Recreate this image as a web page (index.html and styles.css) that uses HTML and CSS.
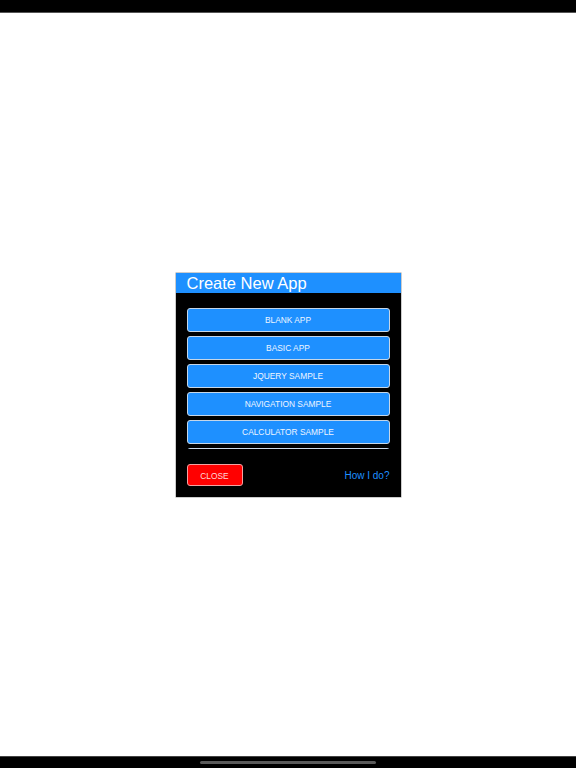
FILE: index.html
```html
<!DOCTYPE html>
<html>
<head>
<meta charset="utf-8">
<link rel="stylesheet" href="styles.css">
</head>
<body>
<div class="screen">
  <div class="status-bar"></div>
  <main class="stage">
    <div class="dialog">
      <div class="dialog-header">Create New App</div>
      <div class="dialog-body">
        <div class="app-list">
          <button class="app-btn">BLANK APP</button>
          <button class="app-btn">BASIC APP</button>
          <button class="app-btn">JQUERY SAMPLE</button>
          <button class="app-btn">NAVIGATION SAMPLE</button>
          <button class="app-btn">CALCULATOR SAMPLE</button>
          <button class="app-btn" aria-label="More samples"></button>
        </div>
        <div class="dialog-footer">
          <button class="close-btn">CLOSE</button>
          <a class="help-link">How I do?</a>
        </div>
      </div>
    </div>
  </main>
  <div class="home-bar"><div class="home-indicator"></div></div>
</div>
</body>
</html>
```
FILE: styles.css
```css
html, body {
  margin: 0;
  padding: 0;
  background: #fff;
  font-family: "Liberation Sans", Arial, sans-serif;
}
.screen {
  width: 576px;
  height: 768px;
  display: flex;
  flex-direction: column;
}
.status-bar {
  height: 13px;
  background: #000;
  border-bottom: 1px solid #555;
  box-sizing: border-box;
}
.stage {
  flex: 1;
  display: flex;
  align-items: center;
  justify-content: center;
}
.dialog {
  width: 225px;
  background: #000;
  box-shadow: 0 0 0 0.5px #999;
  margin-top: 1px;
}
.dialog-header {
  height: 20px;
  background: #1e90ff;
  color: #fff;
  font-size: 16.5px;
  line-height: 21px;
  padding-left: 11px;
  overflow: hidden;
}
.dialog-body {
  padding: 14.5px 11px 11px;
}
.app-list {
  height: 141.5px;
  overflow: hidden;
  display: flex;
  flex-direction: column;
  gap: 4px;
}
.app-btn {
  flex: none;
  height: 24px;
  margin: 0;
  padding: 1px 0 0;
  background: #1e90ff;
  border: 1px solid #c5d6e8;
  border-radius: 3px;
  color: #eef5ff;
  font-family: "Liberation Sans", Arial, sans-serif;
  font-size: 8.4px;
  text-align: center;
  width: 100%;
}
.dialog-footer {
  margin-top: 15px;
  display: flex;
  justify-content: space-between;
  align-items: center;
}
.close-btn {
  width: 56px;
  height: 22px;
  margin: 0;
  padding: 1px 0 0;
  background: #ff0000;
  border: 1px solid #f3a0a0;
  border-radius: 3px;
  color: #ffd8d8;
  font-family: "Liberation Sans", Arial, sans-serif;
  font-size: 8.4px;
}
.help-link {
  color: #1e90ff;
  font-size: 10px;
  padding-top: 1px;
}
.home-bar {
  height: 12px;
  background: #000;
  border-top: 1px solid #444;
  box-sizing: border-box;
  display: flex;
  justify-content: center;
  align-items: center;
}
.home-indicator {
  width: 176px;
  height: 3px;
  border-radius: 2px;
  background: #5a5a5a;
}
```
